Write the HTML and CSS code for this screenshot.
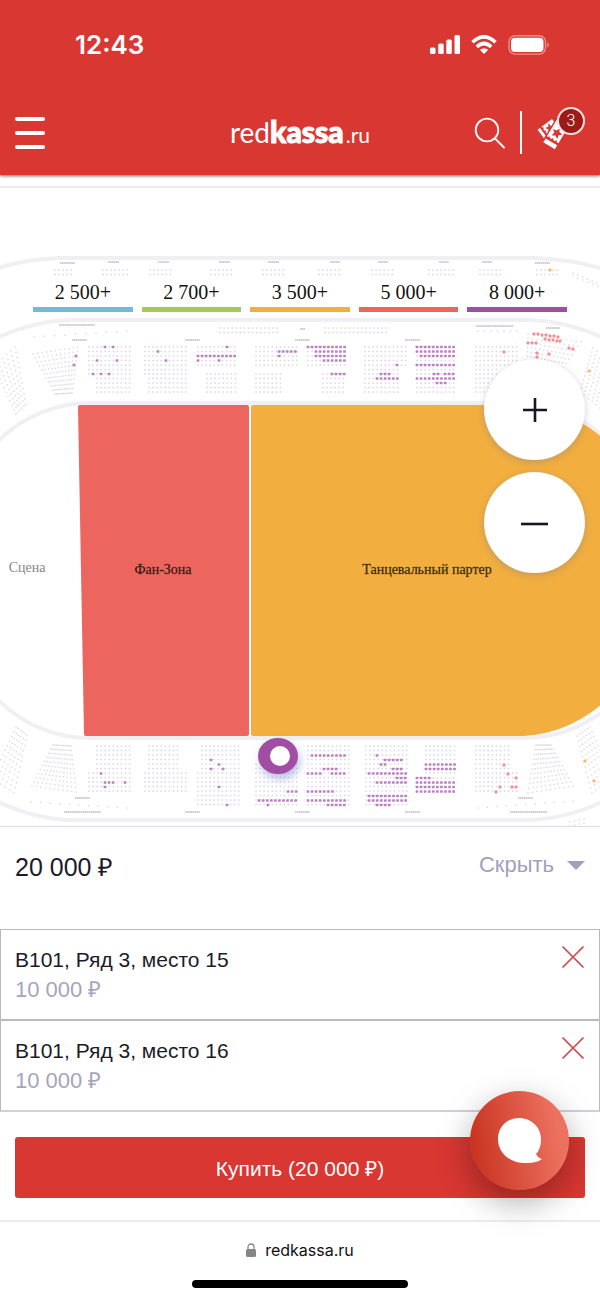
FILE: index.html
```html
<!DOCTYPE html>
<html lang="ru">
<head>
<meta charset="utf-8">
<meta name="viewport" content="width=device-width, initial-scale=1">
<title>redkassa.ru</title>
<link rel="stylesheet" href="styles.css">
</head>
<body>
<div class="top">
  <div class="status">
    <span class="clock">12:43</span>
    <div class="status-icons">
      <svg width="30" height="20" viewBox="0 0 30 20" fill="#fff"><rect x="0" y="12.500" width="5.500" height="6.500" rx="1.500"/><rect x="8.200" y="8.500" width="5.500" height="10.500" rx="1.500"/><rect x="16.300" y="4.500" width="5.500" height="14.500" rx="1.500"/><rect x="24.500" y="0" width="5.500" height="19" rx="1.500"/></svg>
      <svg width="26" height="20" viewBox="0 0 26 20" fill="none" stroke="#fff" stroke-width="3.600"><path d="M1.500 7.200Q13-3.500 24.500 7.200"/><path d="M5.800 11.800Q13 5.200 20.200 11.800"/><path d="M13 19L8.800 14.800Q13 11.600 17.200 14.800Z" fill="#fff" stroke="none"/></svg>
      <svg width="42" height="20" viewBox="0 0 42 20"><rect x="1" y=".7" width="36.500" height="18.400" rx="6" fill="none" stroke="#ec918e" stroke-width="1.400"/><rect x="3" y="2.700" width="32.500" height="14.400" rx="4" fill="#fff"/><path d="M39.300 7Q42.500 9.800 39.300 12.800Z" fill="#ec918e"/></svg>
    </div>
  </div>
  <header class="header">
    <button class="menu" aria-label="Меню"><i></i><i></i><i></i></button>
    <a class="logo" href="#"><span class="logo-red">red</span><span class="logo-kassa">kassa</span><span class="logo-ru">.ru</span></a>
    <div class="tools">
      <button class="icon-btn" aria-label="Поиск"><svg width="32" height="32" viewBox="0 0 32 32" fill="none" stroke="#fff" stroke-width="1.800" stroke-linecap="round"><circle cx="14" cy="13" r="11.300"/><path d="M22 21.500L31 30.500"/></svg></button>
      <span class="divider"></span>
      <a class="cart" href="#" aria-label="Билеты">
        <svg width="34" height="34" viewBox="0 0 34 34"><g transform="translate(12 14) rotate(53)"><path d="M-7-9H6V4H4L3 2.500 1.500 4H0L-1 2.500-2.500 4H-4L-5 2.500-6 4H-7Z" fill="#fff"/><path d="M-7 6H6V9H-7Z" fill="#fff"/><path d="M-1-7L0-4 4-3.500 1-1.500 2 2-1 0-4 2-3-1.500-6-3.500-2-4Z" fill="#d93732"/></g><g transform="translate(20 17) rotate(31)"><path d="M-8.500-13H6.500V14H-8.500Z" fill="#d93732"/><path d="M-7-12H6.500V8H4.500L3.500 6.500 2 8H.5L-.5 6.500-2 8H-3.500L-4.500 6.500-5.500 8H-7Z" fill="#fff"/><path d="M-7 10.500H6.500V15H-7Z" fill="#fff"/><path d="M0-5.500L1.500-2 5.500-1.500 2.500 1 3.300 5 0 3-3.300 5-2.500 1-5.500-1.500-1.500-2Z" fill="#d93732"/></g></svg>
        <span class="badge">3</span>
      </a>
    </div>
  </header>
</div>

<main>
  <section class="map" aria-label="Схема зала">
    <svg class="hall" viewBox="0 188 600 638">
      <g class="ring">
        <path d="M-10 271Q22 259 60 258H535Q574 259 610 271"/>
        <path d="M-10 341Q32 321 70 320H530Q570 321 610 341"/>
        <path d="M-40 533A130 130 0 0 1 90 403H516M-40 608A130 130 0 0 0 90 738H524A130 130 0 0 0 654 608M516 403A130 130 0 0 1 646 533"/>
        <path d="M-10 798Q32 819 70 820H528Q570 819 610 798"/>
      </g>
      <path d="M80 405H247Q249 405 249 407V734Q249 736 247 736H86Q84 736 84 734L78 407Q78 405 80 405Z" fill="#ec655f"/>
      <path d="M253 405H516A130 130 0 0 1 646 535V606A130 130 0 0 1 524 736H253Q251 736 251 734V407Q251 405 253 405Z" fill="#f2ae3f"/>
      <g id="captions" fill="#c9c9ce"></g>
      <g id="seats"></g>
      <g class="zone" text-anchor="middle">
        <text x="27" y="572" fill="#858588">Сцена</text>
        <text class="strong" x="163" y="574" fill="#321212">Фан-Зона</text>
        <text class="strong" x="427" y="574" fill="#352810">Танцевальный партер</text>
      </g>
      <g class="marker"><ellipse cx="278" cy="756" rx="20" ry="18" fill="#a14da4"/><circle cx="280" cy="756" r="10" fill="#fff"/></g>
    </svg>
    <ul class="legend">
      <li class="blue">2 500+</li>
      <li class="green">2 700+</li>
      <li class="orange">3 500+</li>
      <li class="coral">5 000+</li>
      <li class="purple">8 000+</li>
    </ul>
    <div class="zoom">
      <button aria-label="Увеличить"><svg width="28" height="28" viewBox="0 0 28 28" stroke="#161624" stroke-width="2.600"><path d="M2 14H26M14 2V26"/></svg></button>
      <button aria-label="Уменьшить"><svg width="28" height="28" viewBox="0 0 28 28" stroke="#161624" stroke-width="2.600"><path d="M0 15H27"/></svg></button>
    </div>
  </section>

  <section class="summary">
    <span class="total">20 000 ₽</span>
    <button class="toggle">Скрыть<svg width="18" height="9" viewBox="0 0 18 9"><path d="M0 0H18L9 9Z" fill="#a0a0bd"/></svg></button>
  </section>

  <ul class="tickets">
    <li>
      <div><p class="seat">B101, Ряд 3, место 15</p><p class="price">10 000 ₽</p></div>
      <button class="remove" aria-label="Удалить место 15"><svg width="24" height="24" viewBox="0 0 24 24" stroke="#d2474b" stroke-width="1.700"><path d="M1.500 1.500L22.500 22.500M22.500 1.500L1.500 22.500"/></svg></button>
    </li>
    <li>
      <div><p class="seat">B101, Ряд 3, место 16</p><p class="price">10 000 ₽</p></div>
      <button class="remove" aria-label="Удалить место 16"><svg width="24" height="24" viewBox="0 0 24 24" stroke="#d2474b" stroke-width="1.700"><path d="M1.500 1.500L22.500 22.500M22.500 1.500L1.500 22.500"/></svg></button>
    </li>
  </ul>

  <div class="checkout">
    <button class="buy">Купить (20 000 ₽)</button>
    <button class="chat" aria-label="Чат"><svg width="46" height="48" viewBox="0 0 46 48"><path d="M22 1C34 1 44 10 44 22C44 29 42 34 39 37Q41 41 45 42Q40 46 30 46C13 47 1 36 1 22C1 10 10 1 22 1Z" fill="#fff"/></svg></button>
  </div>
</main>

<footer class="browser">
  <div class="url"><svg width="10" height="14" viewBox="0 0 10 14"><path d="M2 7V4a3 3 0 0 1 6 0V7" fill="none" stroke="#858585" stroke-width="1.300"/><rect y="6" width="10" height="8" rx="1.500" fill="#858585"/></svg>redkassa.ru</div>
  <div class="home"></div>
</footer>
<script src="hall.js"></script>
</body>
</html>
```
FILE: styles.css
```css
* { box-sizing: border-box; }
body { margin: 0; background: #fff; color: #1b1b29; font-family: "Liberation Sans", Arial, sans-serif; }
button { border: 0; padding: 0; background: none; font: inherit; color: inherit; cursor: pointer; }
a { color: inherit; text-decoration: none; }
svg { display: block; }
ul { list-style: none; margin: 0; padding: 0; }
p { margin: 0; }

.top { position: relative; z-index: 1; background: #d93732; color: #fff; box-shadow: 0 1px 3px #0009; }
.status { display: flex; justify-content: space-between; align-items: center; height: 90px; padding: 0 50px 0 75px; }
.clock { font: 600 26px/30px Inter, sans-serif; }
.status-icons { display: flex; gap: 11px; }
.header { display: grid; grid-template-columns: 1fr auto 1fr; align-items: center; height: 85px; padding: 0 15px; }
.menu { display: grid; gap: 10px; width: 30px; }
.menu i { height: 4px; border-radius: 2px; background: #fff; }
.logo { display: flex; align-items: baseline; line-height: 32px; }
.logo-red { font: 400 28px/28px Lato, sans-serif; }
.logo-kassa { font: 900 30px/28px Lato, sans-serif; -webkit-text-stroke: 1px #fff; }
.logo-ru { font: 400 21px/28px Lato, sans-serif; margin-left: 2px; }
.tools { display: flex; justify-content: flex-end; align-items: center; gap: 15px; }
.divider { width: 2px; height: 43px; background: #fff; }
.cart { position: relative; width: 48px; }
.badge { position: absolute; right: 0; top: -9px; width: 28px; height: 28px; border: 2px solid #fbe3e1; border-radius: 50%; background: #9c1b19; font: 300 16px/24px Roboto, sans-serif; text-align: center; }

.map { position: relative; margin-top: 11px; border-top: 2px solid #ededef; border-bottom: 1px solid #dcdce2; }
.hall { width: 100%; height: auto; }
.ring { fill: none; stroke: #f0f0f4; stroke-width: 4; }
.zone { font: 14px "Liberation Serif", serif; }
.strong { stroke: #35281088; stroke-width: 0.4; }
.marker { filter: drop-shadow(2px 5px 4px #7d8cc888); }
.legend { position: absolute; top: 92px; left: 33px; right: 33px; display: grid; grid-template-columns: repeat(5, 1fr); gap: 9px; }
.legend li { height: 32px; border-bottom: 5px solid var(--tier); color: #111; font: 20px/24px "Liberation Serif", serif; text-align: center; }
.blue { --tier: #72b9de; }
.green { --tier: #a7c957; }
.orange { --tier: #f2ae3f; }
.coral { --tier: #ec655f; }
.purple { --tier: #a14da4; }
.zoom { position: absolute; top: 171px; right: 15px; display: grid; gap: 12px; }
.zoom button { display: grid; place-items: center; width: 101px; height: 101px; border-radius: 50%; background: #fff; box-shadow: 0 2px 7px #6670a055; }

.summary { display: flex; justify-content: space-between; align-items: flex-start; height: 102px; padding: 24px 15px; }
.total { font-size: 25px; line-height: 32px; }
.toggle { display: flex; align-items: center; gap: 13px; font-size: 22px; line-height: 28px; color: #a0a0bd; }

.tickets li { display: flex; justify-content: space-between; align-items: flex-start; padding: 15px 14px 14px; border: 1px solid #b9b9c2; border-bottom: 2px solid #b9b9c8; }
.tickets li + li { border-top: 0; border-bottom-color: #d0d0d6; }
.seat { font-size: 21px; line-height: 30px; }
.price { font-size: 22px; line-height: 30px; color: #a5a5bd; }

.checkout { position: relative; padding: 25px 15px 22px; border-bottom: 2px solid #ededef; }
.buy { display: block; width: 100%; height: 61px; border-radius: 3px; background: #d93732; color: #fff; font-size: 21px; }
.chat { position: absolute; right: 31px; top: -21px; display: grid; place-items: center; width: 99px; height: 99px; border-radius: 50%; background: linear-gradient(80deg, #c93623 10%, #ed715f 85%); box-shadow: 0 12px 34px #0005; }

.browser { display: grid; justify-items: center; gap: 18px; padding: 16px 0 12px; }
.url { display: flex; align-items: center; gap: 9px; font: 16px/24px Inter, sans-serif; color: #111; }
.home { width: 36%; height: 8px; border-radius: 4px; background: #000; }
```
FILE: hall.js
```js
const ns = "http://www.w3.org/2000/svg";
const STEP_X = 4.07;
const STEP_Y = 4.5;
const layer = document.getElementById("seats");

function dot(x, y, size, color) {
  const r = document.createElementNS(ns, "rect");
  r.setAttribute("x", x - size / 2);
  r.setAttribute("y", y - size / 2);
  r.setAttribute("width", size);
  r.setAttribute("height", size);
  r.setAttribute("rx", size / 4);
  r.setAttribute("fill", color);
  layer.append(r);
}

// Sold seats, straight blocks: left, right, top, bottom
const blocks = [
  [89, 130, 347, 376], [97, 130, 378.5, 393], [145, 188, 347, 376], [149, 188, 378.5, 393],
  [198, 237, 347, 366], [207, 237, 374, 393], [256, 298, 347, 366], [256, 282, 374, 393],
  [308, 347, 347, 366], [323, 347, 374, 393], [365, 408, 347, 366], [365, 399, 369.5, 393],
  [417, 457, 347, 393], [476, 518, 347, 366], [476, 500, 369.5, 393],
  [220, 280, 328, 334], [325, 387, 328, 334],
  [55, 73, 270, 275], [103, 128, 270, 275], [150, 174, 270, 275], [211, 233, 270, 275],
  [263, 286, 270, 275], [319, 342, 270, 275], [372, 395, 270, 275], [429, 455, 270, 275],
  [480, 503, 270, 275], [537, 560, 270, 275],
  [97, 130, 746, 770], [89, 130, 773, 793], [149, 181, 746, 770], [145, 188, 773, 793],
  [202, 240, 746, 770], [198, 240, 773, 806], [256, 298, 764, 806], [308, 350, 746, 806],
  [366, 408, 746, 806], [426, 457, 746, 774], [417, 457, 778, 793],
  [476, 509, 746, 770], [476, 518, 773, 793]
];
for (const [l, r, t, b] of blocks)
  for (let y = t; y <= b; y += STEP_Y)
    for (let x = l; x <= r; x += STEP_X) dot(x, y, 1.6, "#d9d4e2");

// Sold seats, corner blocks: four corners, columns, rows
const corners = [
  [33, 354, 78, 347, 72, 393, 55, 394, 11, 11],
  [-6, 366, 15, 347, 26, 404, 16, 414, 6, 12],
  [53, 745, 71, 746, 76, 792, 32, 786, 11, 11],
  [16, 727, 27, 735, 14, 793, -8, 778, 6, 12],
  [536, 745, 551, 745, 573, 786, 528, 793, 11, 11],
  [577, 736, 590, 727, 612, 778, 592, 793, 6, 12],
  [528, 334, 581, 342, 560, 372, 527, 365, 12, 8],
  [593, 348, 612, 364, 600, 408, 580, 392, 6, 12],
  [573, 273, 597, 283, 598, 286, 573, 276, 6, 2],
  [34, 337, 127, 331, 127, 331, 34, 337, 10, 1],
  [478, 331, 517, 331, 517, 331, 478, 331, 7, 1],
  [31, 802, 127, 808, 127, 808, 31, 802, 11, 1],
  [478, 808, 573, 801, 573, 801, 478, 808, 11, 1],
  [570, 822, 584, 819, 584, 823, 570, 826, 4, 2]
];
for (const [x1, y1, x2, y2, x3, y3, x4, y4, cols, rows] of corners)
  for (let j = 0; j < rows; j++)
    for (let i = 0; i < cols; i++) {
      const u = i / (cols - 1), v = rows > 1 ? j / (rows - 1) : 0;
      dot((x1 + (x2 - x1) * u) * (1 - v) + (x4 + (x3 - x4) * u) * v,
          (y1 + (y2 - y1) * u) * (1 - v) + (y4 + (y3 - y4) * u) * v, 1.5, "#dadae0");
    }

// Seats on sale: row y, then pairs of first and last seat x
const purple = [
  [347, 105, 105, 113, 113, 227, 227, 308, 346, 417, 456],
  [351.5, 158, 158, 279, 297, 316, 346, 417, 456],
  [356, 198, 237, 279, 279, 316, 346, 421, 456],
  [360.5, 97, 97, 117, 117, 166, 166, 198, 198, 219, 219, 324, 346],
  [365, 397, 397, 417, 456],
  [374, 93, 93, 101, 101, 109, 109, 332, 346, 381, 391, 434, 439, 445, 456],
  [378.5, 377, 399, 417, 456], [383, 437, 448],
  [755.5, 312, 346, 377, 377], [760, 211, 211, 385, 403],
  [764.5, 219, 219, 381, 387, 426, 456],
  [769, 211, 211, 223, 223, 324, 338, 393, 403, 426, 456],
  [773.5, 101, 101, 308, 322, 332, 346, 369, 408],
  [778, 397, 408, 417, 432],
  [782.5, 105, 114, 125, 125, 377, 408, 417, 456],
  [787, 105, 105, 219, 219, 417, 456],
  [791.5, 288, 298, 308, 334, 417, 456],
  [796, 369, 408], [800.5, 259, 298, 308, 346, 369, 408],
  [805, 227, 227, 268, 268, 328, 346, 377, 391]
];
for (const [y, ...runs] of purple)
  for (let k = 0; k < runs.length; k += 2)
    for (let x = runs[k]; x <= runs[k + 1] + 0.5; x += STEP_X) dot(x, y, 2.7, "#bd80c3");

const coral = [
  [504, 352], [534, 334], [538, 334], [542, 335], [546, 335], [550, 336], [554, 336], [558, 337],
  [545, 339], [549, 340], [553, 340], [557, 341], [560, 341], [528, 343], [532, 343], [536, 343],
  [537, 353], [537, 357], [549, 354], [569, 348], [573, 349],
  [504, 765], [508, 774], [516, 778], [500, 787], [512, 787], [516, 787], [496, 792]
];
for (const [x, y] of coral) dot(x, y, 2.8, "#f08f8e");
for (const [x, y] of [[76, 356], [74, 365]]) dot(x, y, 2.8, "#c98a9c");
for (const [x, y] of [[550, 270], [589, 371], [585, 761], [594, 781]]) dot(x, y, 2.8, "#f4bd62");

// Sector name strips: x, y, width
const strips = [
  [60, 263, 15], [108, 262, 11], [158, 262, 11], [219, 262, 11], [268, 262, 11], [330, 262, 10],
  [378, 262, 10], [439, 262, 10], [482, 262, 10], [535, 263, 15], [59, 325, 36], [72, 340, 15],
  [185, 340, 15], [295, 340, 15], [405, 340, 15], [300, 329, 5], [476, 326, 37], [546, 328, 14],
  [75, 798, 15], [64, 812, 37], [185, 812, 15], [295, 812, 15], [405, 812, 15], [518, 798, 15], [510, 812, 37]
];
const captions = document.getElementById("captions");
for (const [x, y, w] of strips) {
  const p = document.createElementNS(ns, "path");
  p.setAttribute("d", `M${x} ${y}h${w}`);
  p.setAttribute("stroke", "#cdcdd2");
  p.setAttribute("stroke-width", 1.8);
  p.setAttribute("stroke-dasharray", "1.5 .4");
  captions.append(p);
}
```
